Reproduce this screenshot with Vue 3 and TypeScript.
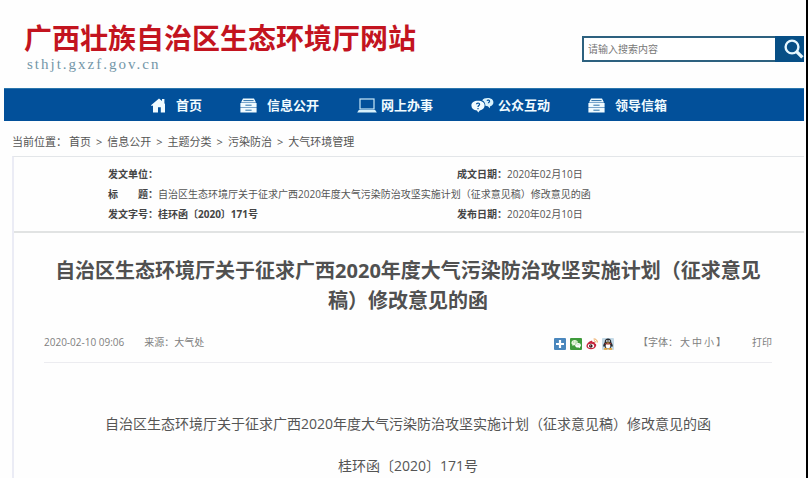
<script setup lang="ts">
import { ref } from 'vue'

type IconName = 'home' | 'drawer' | 'laptop' | 'chat'

interface NavItem {
  label: string
  icon: IconName
}

const navItems: NavItem[] = [
  { label: '首页', icon: 'home' },
  { label: '信息公开', icon: 'drawer' },
  { label: '网上办事', icon: 'laptop' },
  { label: '公众互动', icon: 'chat' },
  { label: '领导信箱', icon: 'drawer' },
]

const crumbs: string[] = ['首页', '信息公开', '主题分类', '污染防治', '大气环境管理']
const title = '自治区生态环境厅关于征求广西2020年度大气污染防治攻坚实施计划（征求意见稿）修改意见的函'
const sizes: string[] = ['大', '中', '小']
const keyword = ref('')

function printPage(): void {
  window.print()
}
</script>

<template>
  <div class="page">
    <header class="header">
      <div class="brand">
        <h1 class="site-name">广西壮族自治区生态环境厅网站</h1>
        <a class="site-url" href="#">sthjt.gxzf.gov.cn</a>
      </div>
      <form class="search" role="search" @submit.prevent>
        <input v-model="keyword" class="search-input" type="text" placeholder="请输入搜索内容" aria-label="请输入搜索内容" />
        <button class="search-button" type="submit" aria-label="搜索">
          <svg width="20" height="20" viewBox="0 0 20 20" fill="none" stroke="#e6f8ff">
            <circle cx="8" cy="8" r="6.4" stroke-width="2.4" />
            <path d="M12.6 12.6 18.4 18.4" stroke-width="3.4" />
          </svg>
        </button>
      </form>
    </header>

    <nav class="nav">
      <a v-for="item in navItems" :key="item.label" class="nav-link" :class="item.icon" href="#">
        <svg v-if="item.icon === 'home'" width="15" height="15" viewBox="0 0 15 15" fill="#f0fbff">
          <path d="M0 7.2 8 0.4 11 3V1h2.4v4.2L14 6v8.6H9.8V9.2H7v5.4H2V7.6L.8 8Z" />
        </svg>
        <svg v-else-if="item.icon === 'drawer'" width="17" height="15" viewBox="0 0 17 15">
          <path d="M3 .4h11L16 4.400H1Z" fill="#f0fbff" />
          <path d="M.4 5h16.2v4.4H.4ZM.4 10h16.2v4.600H.4Z" fill="#f0fbff" />
          <path d="M3.4 2.600h10.2M5.400 7.200h6.200M5.400 12.200h6.200" stroke="#2b70a8" stroke-width="1" />
        </svg>
        <svg v-else-if="item.icon === 'laptop'" width="20" height="15" viewBox="0 0 20 15">
          <rect x="3" y="1" width="14" height="10" fill="none" stroke="#c9e8f8" stroke-width="1.2" />
          <path d="M1.8 12h16.4l1.6 2.4H.2Z" fill="#d8f1fb" />
        </svg>
        <svg v-else width="23" height="16" viewBox="0 0 23 16">
          <path d="M16.6 1c3.4 0 5.8 1.6 5.8 4.2 0 2-1.2 3.4-3.2 4l-.4 2-2-2-2.4-.4C14.4 5.4 13 4 11.2 3.4 12.2 1.8 14 1 16.6 1Z" fill="#d8f1fb" />
          <path d="M7 3.8c4 0 6.6 2 6.6 4.8 0 2.6-2 4.2-4.8 4.8l-1.6 2.2-1.2-2C2.6 13.2.4 11.4.4 8.6.4 5.8 3 3.8 7 3.8Z" fill="#f0fbff" />
          <path d="M5.4 7.3c.2-1.8 3.4-1.6 3.2.1C8.5 8.600 7 8.500 7 9.900M7 11v1.200M16 3.800c.6-1.200 2.800-.8 2.600.5-.1 1-1.200.9-1.200 2" fill="none" stroke="#02509a" stroke-width="1.200" />
        </svg>
        <span>{{ item.label }}</span>
      </a>
    </nav>

    <div class="crumbs">
      <span>当前位置：</span>
      <template v-for="(crumb, i) in crumbs" :key="crumb">
        <span v-if="i > 0" class="separator">&gt;</span>
        <a href="#">{{ crumb }}</a>
      </template>
    </div>

    <main class="article">
      <dl class="info">
        <div class="field"><dt>发文单位：</dt><dd></dd></div>
        <div class="field"><dt>成文日期：</dt><dd>2020年02月10日</dd></div>
        <div class="field wide"><dt class="spread"><span>标</span><span>题：</span></dt><dd>{{ title }}</dd></div>
        <div class="field"><dt>发文字号：</dt><dd class="strong">桂环函〔2020〕171号</dd></div>
        <div class="field"><dt>发布日期：</dt><dd>2020年02月10日</dd></div>
      </dl>

      <div class="content">
        <h2 class="title">{{ title }}</h2>
        <div class="meta">
          <time>2020-02-10 09:06</time>
          <span class="source">来源：大气处</span>
          <div class="share">
            <a href="#" aria-label="分享">
              <svg width="12" height="12" viewBox="0 0 12 12"><rect width="12" height="12" rx="1" fill="#4a87bd" /><path d="M6 2v8M2 6h8" stroke="#fff" stroke-width="2.2" /></svg>
            </a>
            <a href="#" aria-label="微信">
              <svg width="12" height="12" viewBox="0 0 12 12">
                <rect width="12" height="12" rx="1" fill="#3f9b3c" />
                <path d="M4.8 2C2.8 2 1.4 3.2 1.4 4.7c0 .9.5 1.6 1.2 2.1l-.3 1.2 1.4-.7h1.2C5 5.5 6.2 4.5 8.1 4.4 7.7 3 6.5 2 4.8 2Z" fill="#e9f7df" />
                <ellipse cx="8" cy="7.3" rx="2.8" ry="2.3" fill="#fff" />
                <path d="m8.6 9 1.4 1.3-.2-1.9Z" fill="#fff" />
                <path d="M3.4 4h.8M5.6 4h.8M6.8 6.8h.6M8.6 6.8h.6" stroke="#3f9b3c" stroke-width=".8" />
              </svg>
            </a>
            <a href="#" aria-label="微博">
              <svg width="12" height="12" viewBox="0 0 12 12">
                <path d="M4.7 3c1.3-.5 2 .1 1.7 1.2 1.5-.5 2.9 0 2.5 1.3 1 .3 1.5 1 1.3 2C9.8 9.8 7.6 11.2 5 11.2S.4 10 .4 8C.4 6.2 2.7 3.7 4.7 3Z" fill="#c6253c" />
                <ellipse cx="5" cy="7.9" rx="3.2" ry="2.1" fill="#fff" />
                <circle cx="4.8" cy="8" r="1.8" fill="#35161b" />
                <circle cx="4.3" cy="7.7" r=".5" fill="#fff" />
                <path d="M7.6 1c2.3-.4 4 1.3 3.6 3.6M7.9 2.900c1.100-.2 1.700.5 1.500 1.500" fill="none" stroke="#eda050" stroke-width="1" />
              </svg>
            </a>
            <a href="#" aria-label="QQ">
              <svg width="12" height="12" viewBox="0 0 12 12">
                <rect width="12" height="12" rx="1" fill="#c3d9e6" />
                <path d="M6 .6c-2.1 0-3.3 1.4-3.3 3.6C1.5 6 1 7.5 1.3 8.8l1-.6c.6 1.6 1.7 2.4 3.7 2.4s3.1-.8 3.7-2.4l1 .6c.3-1.300-.2-2.800-1.400-4.600C9.300 2 8.100.6 6 .6Z" fill="#292c32" />
                <ellipse cx="6" cy="8" rx="2.4" ry="2.4" fill="#fff" />
                <ellipse cx="4.900" cy="3" rx=".7" ry="1" fill="#fff" /><ellipse cx="7.100" cy="3" rx=".7" ry="1" fill="#fff" />
                <path d="M4 4.400h4L6 5.400Z" fill="#edaa25" />
                <path d="M2.700 5.500c2 .8 4.600.8 6.600 0" fill="none" stroke="#bb4035" stroke-width="1" />
                <ellipse cx="3.700" cy="10.900" rx="2" ry=".9" fill="#e8a12c" /><ellipse cx="8.300" cy="10.900" rx="2" ry=".9" fill="#e8a12c" />
              </svg>
            </a>
          </div>
          <div class="font-size">【字体：<button v-for="size in sizes" :key="size" type="button">{{ size }}</button>】</div>
          <button class="print" type="button" @click="printPage">打印</button>
        </div>
        <p class="paragraph">{{ title }}</p>
        <p class="paragraph">桂环函〔2020〕171号</p>
      </div>
    </main>
  </div>
</template>

<style>
body {
  margin: 0;
  background: #fefefe;
}
</style>

<style scoped>
.page {
  box-sizing: border-box;
  height: 100vh;
  overflow: hidden;
  padding: 0 2px 0 4px;
  border-right: 2px solid #000;
  color: #555;
  font-family: "Open Sans", "Noto Sans CJK SC", sans-serif;
}

a {
  color: inherit;
  text-decoration: none;
}

button {
  padding: 0;
  border: 0;
  background: none;
  color: inherit;
  font: inherit;
  cursor: pointer;
}

svg {
  display: block;
}

.header {
  display: flex;
  justify-content: space-between;
  align-items: flex-start;
  height: 88px;
}

.brand {
  display: flex;
  flex-direction: column;
  padding: 20px 0 0 20px;
}

.site-name {
  margin: 0;
  color: #c3141f;
  font-size: 28px;
  line-height: 36px;
  font-weight: 700;
  white-space: nowrap;
}

.site-url {
  padding-left: 3px;
  color: #7396a8;
  font-family: "Liberation Serif", serif;
  font-size: 15px;
  line-height: 16px;
  letter-spacing: 2px;
}

.search {
  display: flex;
  box-sizing: border-box;
  width: 222px;
  height: 26px;
  margin-top: 36px;
}

.search-input {
  box-sizing: border-box;
  flex: 1;
  min-width: 0;
  padding: 0 4px;
  border: 2px solid #2d617f;
  border-right: 0;
  border-radius: 0;
  outline: 0;
  background: #fff;
  color: #666;
  font-family: inherit;
  font-size: 10px;
}

.search-input::placeholder {
  color: #777;
  opacity: 1;
}

.search-button {
  display: flex;
  justify-content: flex-end;
  align-items: center;
  width: 29px;
  background: #074f86;
}

.nav {
  display: flex;
  justify-content: center;
  align-items: center;
  gap: 38px;
  box-sizing: border-box;
  height: 33px;
  padding-left: 10px;
  border-top: 1px solid #2b76ac;
  background: #02509a;
  color: #f0fbff;
  font-size: 13px;
  line-height: 20px;
  font-weight: 700;
  white-space: nowrap;
}

.nav-link {
  display: flex;
  align-items: center;
  gap: 10px;
}

.nav-link.laptop,
.nav-link.chat {
  gap: 4px;
}

.crumbs {
  display: flex;
  align-items: center;
  box-sizing: border-box;
  height: 35px;
  padding: 6px 0 0 8px;
  font-size: 11px;
  line-height: 16px;
  white-space: nowrap;
}

.crumbs > span:first-child {
  margin-right: 2px;
}

.separator {
  padding: 0 5px;
}

.article {
  margin-left: 8px;
  border-top: 1px solid #e3e6e9;
  border-left: 2px solid #ebecf5;
}

.info {
  display: grid;
  grid-template-columns: 349px 1fr;
  margin: 0;
  padding: 7px 0 7px 94px;
  border-bottom: 2px solid #e1e3e3;
  font-size: 10px;
  line-height: 20px;
  white-space: nowrap;
}

.field {
  display: flex;
}

.wide {
  grid-column: 1 / -1;
}

.info dt {
  width: 50px;
  color: #444;
  font-weight: 700;
}

.spread {
  display: flex;
  justify-content: space-between;
}

.info dd {
  margin: 0;
}

.info .strong {
  color: #444;
  font-weight: 700;
}

.content {
  padding: 23px 32px 0 30px;
}

.title {
  margin: 0;
  color: #505050;
  font-size: 20px;
  line-height: 30px;
  font-weight: 700;
  text-align: center;
}

.meta {
  display: flex;
  align-items: center;
  box-sizing: border-box;
  height: 36px;
  margin-top: 11px;
  padding-bottom: 6px;
  border-bottom: 1px solid #ececf0;
  color: #808080;
  font-size: 10px;
  line-height: 16px;
  white-space: nowrap;
}

.source {
  margin-left: 20px;
}

.share {
  display: flex;
  gap: 4px;
  margin-left: auto;
  padding-top: 4px;
}

.font-size {
  display: flex;
  gap: 2px;
  margin-left: 24px;
}

.print {
  margin-left: 26px;
}

.paragraph {
  margin: 0;
  font-size: 14px;
  line-height: 42px;
  text-align: center;
}

.meta + .paragraph {
  margin-top: 40px;
}
</style>
